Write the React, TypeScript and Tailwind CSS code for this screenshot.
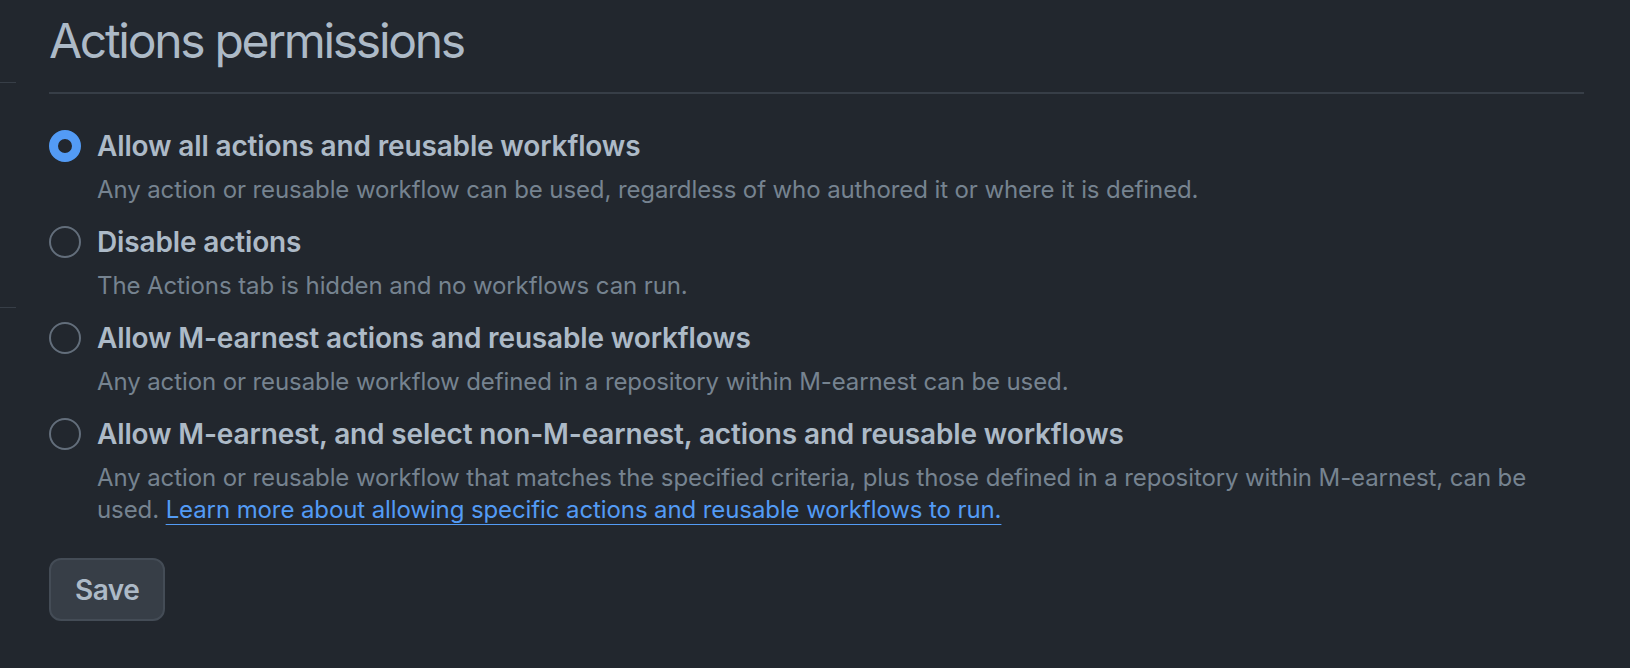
import React from 'react';

type Option = {
  label: string;
  description: React.ReactNode;
  checked?: boolean;
};

function Radio({checked}: {checked?: boolean}) {
  if (checked) {
    return <span className="block w-[32px] h-[32px] rounded-full border-[9px] border-[#539bf5] bg-[#22272e]" />;
  }
  return <span className="block w-[32px] h-[32px] rounded-full border-2 border-[#636e7b] bg-[#22272e]" />;
}

export default function App() {
  const options: Option[] = [
    {
      label: 'Allow all actions and reusable workflows',
      description:
        'Any action or reusable workflow can be used, regardless of who authored it or where it is defined.',
      checked: true,
    },
    {
      label: 'Disable actions',
      description: 'The Actions tab is hidden and no workflows can run.',
    },
    {
      label: 'Allow M-earnest actions and reusable workflows',
      description: 'Any action or reusable workflow defined in a repository within M-earnest can be used.',
    },
    {
      label: 'Allow M-earnest, and select non-M-earnest, actions and reusable workflows',
      description: (
        <>
          Any action or reusable workflow that matches the specified criteria, plus those defined in a repository
          within M-earnest, can be used.{' '}
          <a href="#" className="text-[#539bf5] underline decoration-1 underline-offset-[6px]">
            Learn more about allowing specific actions and reusable workflows to run.
          </a>
        </>
      ),
    },
  ];

  return (
    <div className="min-h-[668px] bg-[#22272e] flex font-['Inter','Noto_Sans',sans-serif]">
      {/* clipped sidebar edge */}
      <div className="w-[16px] shrink-0">
        <div className="mt-[82px] h-px bg-[#373e47]" />
        <div className="mt-[224px] h-px bg-[#373e47]" />
      </div>

      <div className="ml-[33px] w-[1535px]">
        <div className="pt-[11px] pb-[21px] border-b-2 border-[#373e47]">
          <h2 className="text-[48px] leading-[60px] font-normal tracking-[-2.3px] text-[#adbac7]">
            Actions permissions
          </h2>
        </div>

        <div className="mt-[32px] flex flex-col gap-[16px]">
          {options.map((opt, idx) => (
            <div key={idx} className="flex gap-[16px]">
              <div className="h-[40px] flex items-center shrink-0">
                <Radio checked={opt.checked} />
              </div>
              <div>
                <div className="text-[28px] leading-[40px] font-semibold tracking-[-0.15px] text-[#adbac7]">
                  {opt.label}
                </div>
                <p className="mt-[8px] text-[24px] leading-[32px] tracking-[-0.1px] text-[#768390]">
                  {opt.description}
                </p>
              </div>
            </div>
          ))}
        </div>

        <button className="mt-[32px] h-[63px] px-[24px] rounded-[12px] border-2 border-[#444c56] bg-[#373e47] text-[28px] font-semibold tracking-[-0.5px] text-[#adbac7]">
          Save
        </button>
      </div>
    </div>
  );
}
